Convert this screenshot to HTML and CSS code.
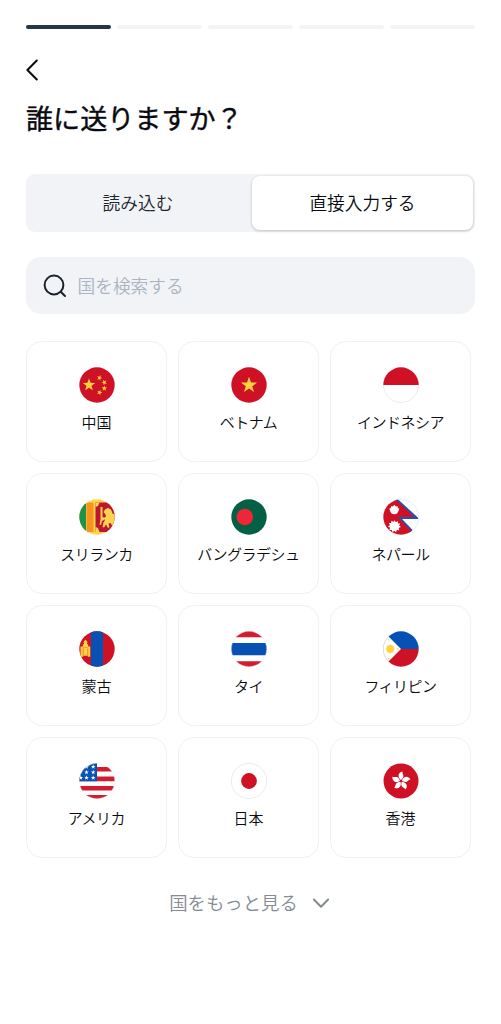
FILE: index.html
```html
<!DOCTYPE html>
<html lang="ja">
<head>
<meta charset="utf-8">
<meta name="viewport" content="width=device-width">
<title>誰に送りますか？</title>
<link rel="stylesheet" href="styles.css">
</head>
<body>
<svg class="defs" aria-hidden="true">
  <defs>
    <clipPath id="round"><circle cx="18" cy="18" r="17.7"/></clipPath>
    <path id="star" d="M0-1 .235-.324.951-.309.38.124.588.809 0 .4-.588.809-.38.124-.951-.309-.235-.324Z"/>
  </defs>
</svg>
<main class="screen">
  <div class="progress"><span class="step done"></span><span class="step"></span><span class="step"></span><span class="step"></span><span class="step"></span></div>
  <button class="back" aria-label="戻る"><svg width="14" height="22" viewBox="0 0 14 22"><path d="M10.800 1.500 1.400 11l9.400 9.500"/></svg></button>
  <h1 class="title">誰に送りますか？</h1>
  <div class="tabs"><button class="tab">読み込む</button><button class="tab active">直接入力する</button></div>
  <div class="search">
    <svg width="24" height="24" viewBox="0 0 24 24"><circle cx="11" cy="11" r="9.400"/><path d="m17.700 17.700 4.300 4.300"/></svg>
    <span>国を検索する</span>
  </div>
  <div class="grid">
    <button class="card">
      <svg class="flag" viewBox="0 0 36 36"><g clip-path="url(#round)"><path fill="#cf1126" d="M0 0h36v36H0z"/><g fill="#ffd23f"><use href="#star" transform="translate(10 18) scale(6.600)"/><use href="#star" transform="translate(20.500 10.800) rotate(20) scale(2.900)"/><use href="#star" transform="translate(25.300 15.400) rotate(45) scale(2.900)"/><use href="#star" transform="translate(25.300 21.300) scale(2.900)"/><use href="#star" transform="translate(20.500 25.500) rotate(20) scale(2.900)"/></g></g></svg>
      <span>中国</span>
    </button>
    <button class="card">
      <svg class="flag" viewBox="0 0 36 36"><g clip-path="url(#round)"><path fill="#cf1126" d="M0 0h36v36H0z"/><use href="#star" fill="#ffd23f" transform="translate(18 18.200) scale(8.500)"/></g></svg>
      <span class="kana">ベトナム</span>
    </button>
    <button class="card">
      <svg class="flag" viewBox="0 0 36 36"><g clip-path="url(#round)"><path fill="#fff" d="M0 0h36v36H0z"/><path fill="#cf1126" d="M0 0h36v18H0z"/></g><path class="rim" d="M.5 18a17.500 17.500 0 0 0 35 0"/></svg>
      <span class="kana">インドネシア</span>
    </button>
    <button class="card">
      <svg class="flag" viewBox="0 0 36 36"><g clip-path="url(#round)"><path fill="#ffd34f" d="M0 0h36v36H0z"/><path fill="#1c9448" d="M0 0h7v36H0z"/><path fill="#f7941d" d="M7.500 3.500h7V33h-7z"/><path fill="#bb1730" d="M16.500 3.500H36V33H16.500z"/><g fill="#ffd34f"><path d="M16.500 3.500h4l-1.500 3.500-2.500 1zM16.500 33h4l-1.500-4-2.500-1z"/><path d="M21.500 8h2v10l1.500.5V21l-2 1-1 4-1.500-.5 1-5z"/><path d="m24.500 13 1.500-2.500 3-1.500 3 1.500 1.500 4 2.500 1V28h-2l-2.500-4-2 .5 1 3.500-1.500 1-2-3.500-2 3-1.500-.5 1-4.500 1.500-2.500-2-1.500 3-2-.5-2z"/></g></g></svg>
      <span class="kana">スリランカ</span>
    </button>
    <button class="card">
      <svg class="flag" viewBox="0 0 36 36"><g clip-path="url(#round)"><path fill="#046045" d="M0 0h36v36H0z"/><circle cx="13.800" cy="18" r="8.300" fill="#ee2638"/></g></svg>
      <span class="kana">バングラデシュ</span>
    </button>
    <button class="card">
      <svg class="flag" viewBox="0 0 36 36"><g clip-path="url(#round)"><path fill="#fff" d="M0 0h36v36H0z"/><path fill="#cf1126" stroke="#2450b4" stroke-width="1.800" d="M-3-15 34 19H17L35 38H-3z"/><g fill="#fff"><circle cx="11.300" cy="11.300" r="3.900"/><path d="m6.300 9.500 1.500-.2.200-2 1.800.3 1.500-1.800 1.500 1.800 1.800-.3.200 2 1.500.2-1 3H7.300z"/><circle cx="11.500" cy="26.800" r="4"/><path d="m11.500 21.300 1.200 2 2-1.300.2 2.400 2.300.1-1.100 2.100 1.800 1.400-2.200 1 .5 2.300-2.400-.2-.8 2.200-1.700-1.600-1.900 1.500-.7-2.300-2.400.1.800-2.300-2.100-1.100 1.900-1.400-1-2.100 2.300-.1.300-2.300 2 1.200z"/></g></g><path class="rim" d="M16.500.5A17.500 17.500 0 0 1 35.500 18M35.500 19a17.500 17.500 0 0 1-6.500 13"/></svg>
      <span class="kana">ネパール</span>
    </button>
    <button class="card">
      <svg class="flag" viewBox="0 0 36 36"><g clip-path="url(#round)"><path fill="#cf1126" d="M0 0h36v36H0z"/><path fill="#0751b5" d="M12 0h12v36H12z"/><path fill="#ffd23f" d="M1.500 15.500h2.700v1h4.600v-1h2.400v10.300H8.800v-1H4.200v1H1.500zM3.800 13.200h5.400v3H3.800zM6.500 8.500l2 2.400-.7 2.500H5.200l-.7-2.500z"/><path stroke="#cf1126" stroke-width=".4" d="M4.200 17.500v7M8.800 17.500v7"/></g></svg>
      <span>蒙古</span>
    </button>
    <button class="card">
      <svg class="flag" viewBox="0 0 36 36"><g clip-path="url(#round)"><path fill="#fff" d="M0 0h36v36H0z"/><path fill="#d51c2d" d="M0 0h36v6.300H0zM0 30.300h36V36H0z"/><path fill="#0751b5" d="M0 12h36v12.300H0z"/></g><circle class="rim" cx="18" cy="18" r="17.600" stroke-opacity=".4"/></svg>
      <span class="kana">タイ</span>
    </button>
    <button class="card">
      <svg class="flag" viewBox="0 0 36 36"><g clip-path="url(#round)"><path fill="#0751b5" d="M0 0h36v18H0z"/><path fill="#cf1126" d="M0 18h36v18H0z"/><path fill="#fff" d="m-6-6 24 24L-6 42z"/><circle cx="7.200" cy="18" r="3.900" fill="#ffd23f"/><path stroke="#ffd23f" stroke-width="1" d="M7.200 13.500v9M2.700 18h9M4 14.800l6.400 6.400M10.400 14.800 4 21.200"/><g fill="#ffd23f"><use href="#star" transform="translate(5.800 8.700) scale(1.400)"/><use href="#star" transform="translate(14.800 18) scale(1.400)"/><use href="#star" transform="translate(5.800 27.800) scale(1.400)"/></g></g><path class="rim" d="M5.500 5.500a17.600 17.600 0 0 0 0 25"/></svg>
      <span class="kana">フィリピン</span>
    </button>
    <button class="card">
      <svg class="flag" viewBox="0 0 36 36"><g clip-path="url(#round)"><path fill="#fff" d="M0 0h36v36H0z"/><path fill="#d51c2d" d="M0 4h36v4.500H0zM0 13.500h36v4.800H0zM0 23h36v4.500H0zM0 32h36v4H0z"/><path fill="#0751b5" d="M0 0h18v18.300H0z"/><g fill="#fff"><use href="#star" transform="translate(14.200 3.700) scale(2.400)"/><use href="#star" transform="translate(7.500 3.700) scale(2.400)"/><use href="#star" transform="translate(7.500 9.200) scale(2.400)"/><use href="#star" transform="translate(14.200 9.200) scale(2.400)"/><use href="#star" transform="translate(1.800 14.700) scale(2.400)"/><use href="#star" transform="translate(7.500 14.700) scale(2.400)"/><use href="#star" transform="translate(14.200 14.700) scale(2.400)"/></g></g><circle class="rim" cx="18" cy="18" r="17.600" stroke-opacity=".4"/></svg>
      <span class="kana">アメリカ</span>
    </button>
    <button class="card">
      <svg class="flag" viewBox="0 0 36 36"><circle cx="18" cy="18" r="17.600" fill="#fff"/><circle cx="18" cy="18" r="7.900" fill="#cf1126"/><circle class="rim" cx="18" cy="18" r="17.600"/></svg>
      <span>日本</span>
    </button>
    <button class="card">
      <svg class="flag" viewBox="0 0 36 36"><circle cx="18" cy="18" r="17.500" fill="#cf1126"/><defs><path id="petal" d="M17.800 17C14.200 14 15 9.500 19.500 8.500c-.6 1.800 1.200 3 .9 5-.2 1.600-1.300 2.500-2.600 3.500z"/></defs><g fill="#fff"><use href="#petal"/><use href="#petal" transform="rotate(72 18 18)"/><use href="#petal" transform="rotate(144 18 18)"/><use href="#petal" transform="rotate(216 18 18)"/><use href="#petal" transform="rotate(288 18 18)"/></g></svg>
      <span>香港</span>
    </button>
  </div>
  <button class="more"><span>国をもっと見る</span><svg width="18" height="14" viewBox="0 0 18 14"><path d="m1.900 4.500 7.100 7.300 7.100-7.300"/></svg></button>
</main>
</body>
</html>
```
FILE: styles.css
```css
* { box-sizing: border-box; }
body {
  margin: 0;
  background: #fff;
  color: #090b10;
  font-family: "Noto Sans CJK JP", sans-serif;
}
button {
  margin: 0;
  padding: 0;
  border: 0;
  background: none;
  color: inherit;
  font: inherit;
}
svg { display: block; flex: none; }
.defs { position: absolute; width: 0; height: 0; }
.screen {
  display: flex;
  flex-direction: column;
  width: 501px;
  min-height: 1024px;
  padding: 24.500px 26px 0;
}
.progress { display: grid; grid-template-columns: repeat(5, 1fr); gap: 5.500px; }
.step { height: 4px; border-radius: 2px; background: #f2f4f5; }
.done { background: #283542; }
.back { align-self: flex-start; margin-top: 30.500px; }
.back path, .search path, .search circle, .more path {
  fill: none;
  stroke: currentColor;
  stroke-width: 2;
  stroke-linecap: round;
  stroke-linejoin: round;
}
.title {
  margin: 17px 0 0;
  font-size: 27.100px;
  line-height: 40px;
  font-weight: 400;
  -webkit-text-stroke: .4px currentColor;
}
.tabs {
  display: grid;
  grid-template-columns: 1fr 221px;
  gap: 4px;
  height: 58px;
  margin-top: 36px;
  padding: 2px;
  border-radius: 9px;
  background: #f1f3f6;
}
.tab {
  padding-bottom: 3px;
  border-radius: 8px;
  color: #20242b;
  font-size: 17.700px;
  font-weight: 350;
}
.active { background: #fff; color: #090b10; box-shadow: 0 1px 3px rgba(30, 35, 45, .25); }
.search {
  display: flex;
  align-items: center;
  gap: 10.500px;
  height: 57px;
  margin-top: 25px;
  padding: 0 17px;
  border-radius: 15px;
  background: #f1f3f6;
  color: #1b222b;
}
.search span { padding-bottom: 2px; color: #acb3c1; font-size: 17.700px; font-weight: 350; }
.grid {
  display: grid;
  grid-template-columns: repeat(3, 141px);
  grid-auto-rows: 121px;
  gap: 11px;
  margin-top: 27px;
}
.card {
  display: flex;
  flex-direction: column;
  align-items: center;
  padding-top: 25px;
  border: 1px solid #f0f1f3;
  border-radius: 16px;
}
.flag { width: 36px; height: 36px; }
.rim { fill: none; stroke: #e4e6eb; stroke-width: .8; }
.card span { margin-top: 8px; font-size: 15px; line-height: 22px; font-weight: 350; }
.card .kana { letter-spacing: -.5px; }
.more {
  display: flex;
  align-self: center;
  align-items: center;
  gap: 14px;
  margin: 30px 2px 0 0;
  color: #838b95;
  font-size: 18.400px;
  line-height: 28px;
  font-weight: 350;
}
```
